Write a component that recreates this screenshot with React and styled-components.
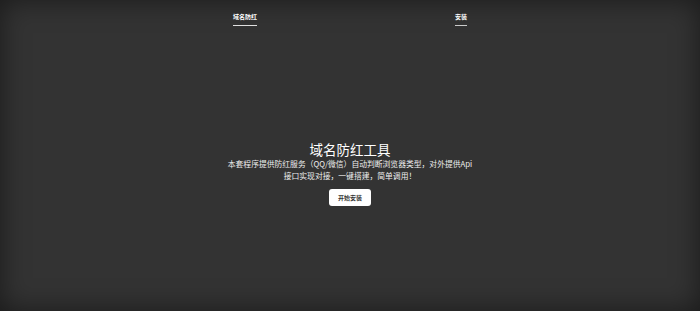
import React from 'react'
import styled, { createGlobalStyle } from 'styled-components'

const GlobalStyle = createGlobalStyle`
  html, body {
    margin: 0;
    height: 100%;
  }
  body {
    background-color: #333;
    box-shadow: inset 0 0 28px rgba(0, 0, 0, .5);
    color: #fff;
    font-family: "Noto Sans CJK SC", "Liberation Sans", sans-serif;
    text-align: center;
  }
`

const Cover = styled.div`
  display: flex;
  flex-direction: column;
  width: 234px;
  height: 311px;
  margin: 0 auto;
`

const Masthead = styled.header`
  padding-top: 12px;
`

const Nav = styled.nav`
  display: flex;
  justify-content: space-between;
`

const NavLink = styled.a`
  font-size: 6px;
  font-weight: 700;
  line-height: 10px;
  color: #fff;
  padding-bottom: 3px;
  border-bottom: 1.5px solid ${p => (p.active ? 'rgba(255,255,255,.85)' : 'rgba(255,255,255,.75)')};
  text-decoration: none;
`

const Main = styled.main`
  display: flex;
  flex-direction: column;
  align-items: center;
  padding-top: 114px;
`

const Heading = styled.h1`
  margin: 0;
  font-size: 13.5px;
  font-weight: 400;
  line-height: 18px;
`

const Lead = styled.p`
  margin: 0;
  width: 250px;
  font-size: 7.8px;
  font-weight: 400;
  line-height: 11.5px;
  color: #eee;
`

const Button = styled.a`
  display: inline-flex;
  align-items: center;
  justify-content: center;
  margin-top: 8px;
  width: 42px;
  height: 17px;
  border-radius: 3px;
  background: #fff;
  color: #333;
  font-size: 6px;
  font-weight: 700;
  text-decoration: none;
`

export default function App () {
  return (
    <>
      <GlobalStyle />
      <Cover>
        <Masthead>
          <Nav>
            <NavLink href='#' active>域名防红</NavLink>
            <NavLink href='#'>安装</NavLink>
          </Nav>
        </Masthead>
        <Main>
          <Heading>域名防红工具</Heading>
          <Lead>
            本套程序提供防红服务（QQ/微信）自动判断浏览器类型，对外提供Api接口实现对接，一键搭建，简单调用！
          </Lead>
          <Button href='#'>开始安装</Button>
        </Main>
      </Cover>
    </>
  )
}
